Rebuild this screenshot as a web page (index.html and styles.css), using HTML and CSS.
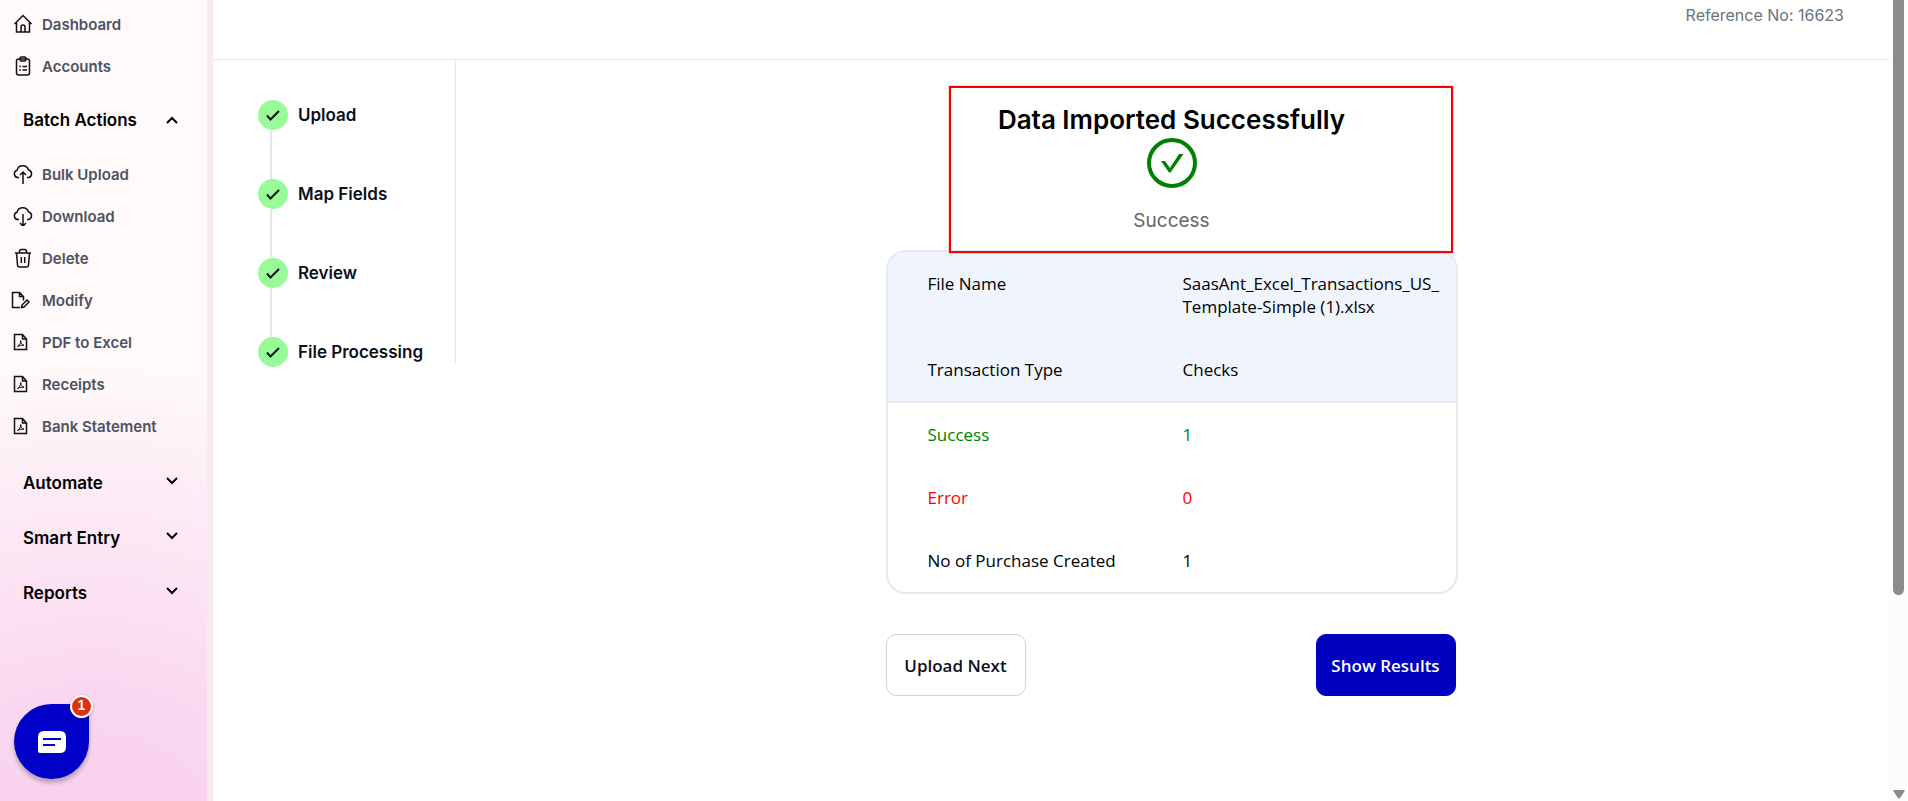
FILE: index.html
```html
<!DOCTYPE html>
<html lang="en">
<head>
    <meta charset="UTF-8">
    <meta name="viewport" content="width=device-width, initial-scale=1.0">
    <title>Bulk Upload</title>
    <link rel="stylesheet" href="styles.css">
</head>
<body>
    <svg class="sprite" aria-hidden="true">
        <symbol id="icon-pdf" viewBox="0 0 20 20">
            <path d="M3.5 2.5h8l4 4.500v10.500h-12z M11.500 2.500v4.500h4"/>
            <path d="M6.500 14.500c2-1 3.500-3.500 3.200-6 0 2.500 1.300 4.300 3.300 4.800-2.500-.3-4.500.2-6.500 1.200z" stroke-width="1"/>
        </symbol>
        <symbol id="icon-down" viewBox="0 0 12 8">
            <path d="M1 1l5 5 5-5"/>
        </symbol>
        <symbol id="icon-tick" viewBox="0 0 14 12">
            <path d="M1 6.500l3.500 4L13 2"/>
        </symbol>
    </svg>

    <div class="layout">
        <nav class="sidebar">
            <ul class="menu">
                <li><a href="#">
                    <svg class="icon" viewBox="0 0 20 20"><path d="M1.500 10L10 1.500 18.500 10M3.500 8.500v9.500h13V8.500M8 18v-5a2 2 0 0 1 4 0v5"/></svg>
                    Dashboard</a></li>
                <li><a href="#">
                    <svg class="icon" viewBox="0 0 20 20"><rect x="3.500" y="3" width="13" height="16" rx="2"/><rect x="7" y="1" width="6" height="4" rx="1.500"/><path d="M6.300 10.500h1.500M9.500 10.500h4.500M6.300 14h1.500M9.500 14h4.500" stroke-width="1.300"/></svg>
                    Accounts</a></li>
            </ul>

            <button class="group group-open" type="button">Batch Actions <svg class="chevron chevron-up"><use href="#icon-down"/></svg></button>
            <ul class="menu menu-batch">
                <li><a href="#">
                    <svg class="icon" viewBox="0 0 20 20"><path d="M6 13.500H4.500a3.700 3.700 0 0 1-.5-7.200 6 6 0 0 1 11.600-.3 3.900 3.900 0 0 1 .2 7.500H14M10 20V8.500M7 11l3-3 3 3"/></svg>
                    Bulk Upload</a></li>
                <li><a href="#">
                    <svg class="icon" viewBox="0 0 20 20"><path d="M6 13.500H4.500a3.700 3.700 0 0 1-.5-7.200 6 6 0 0 1 11.600-.3 3.900 3.900 0 0 1 .2 7.500H14M10 8v11.500M7 17l3 3 3-3"/></svg>
                    Download</a></li>
                <li><a href="#">
                    <svg class="icon" viewBox="0 0 20 20"><path d="M2 5h16M6.500 5V3.500q0-2 2-2h3q2 0 2 2V5M3.500 5l1 12q.2 2 2 2h7q1.800 0 2-2l1-12M8.300 9v6M11.700 9v6"/></svg>
                    Delete</a></li>
                <li><a href="#">
                    <svg class="icon icon-left" viewBox="0 0 20 20"><path d="M9 17.500H1.500v-15h7l4 4v4M8.500 2.500v4h4M10.500 17.500l.5-2.500 5-5 2 2-5 5z"/></svg>
                    Modify</a></li>
                <li><a href="#"><svg class="icon icon-left"><use href="#icon-pdf"/></svg>PDF to Excel</a></li>
                <li><a href="#"><svg class="icon icon-left"><use href="#icon-pdf"/></svg>Receipts</a></li>
                <li><a href="#"><svg class="icon icon-left"><use href="#icon-pdf"/></svg>Bank Statement</a></li>
            </ul>

            <button class="group" type="button">Automate <svg class="chevron"><use href="#icon-down"/></svg></button>
            <button class="group" type="button">Smart Entry <svg class="chevron"><use href="#icon-down"/></svg></button>
            <button class="group" type="button">Reports <svg class="chevron"><use href="#icon-down"/></svg></button>
        </nav>

        <main class="main">
            <header class="topbar">Reference No: 16623</header>
            <div class="content">
                <ol class="steps">
                    <li><span class="dot"><svg><use href="#icon-tick"/></svg></span>Upload</li>
                    <li><span class="dot"><svg><use href="#icon-tick"/></svg></span>Map Fields</li>
                    <li><span class="dot"><svg><use href="#icon-tick"/></svg></span>Review</li>
                    <li><span class="dot"><svg><use href="#icon-tick"/></svg></span>File Processing</li>
                </ol>

                <section class="result">
                    <div class="result-box">
                        <div class="status">
                            <h1>Data Imported Successfully</h1>
                            <svg class="status-icon" viewBox="0 0 50 50">
                                <circle cx="25" cy="25" r="23"/>
                                <path d="M14 23h4l5 7 9-14h4.500L23.500 34.500h-1.500z"/>
                            </svg>
                            <p>Success</p>
                            <div class="highlight"></div>
                        </div>
                        <table class="summary">
                            <tbody class="file-info">
                                <tr><th scope="row">File Name</th><td>SaasAnt_Excel_Transactions_US_<wbr>Template-Simple (1).xlsx</td></tr>
                                <tr><th scope="row">Transaction Type</th><td>Checks</td></tr>
                            </tbody>
                            <tbody>
                                <tr class="success"><th scope="row">Success</th><td>1</td></tr>
                                <tr class="error"><th scope="row">Error</th><td>0</td></tr>
                                <tr><th scope="row">No of Purchase Created</th><td>1</td></tr>
                            </tbody>
                        </table>
                        <div class="actions">
                            <button class="btn" type="button">Upload Next</button>
                            <button class="btn btn-primary" type="button">Show Results</button>
                        </div>
                    </div>
                </section>
            </div>
        </main>

        <div class="scrollbar">
            <div class="thumb"></div>
            <svg class="scroll-arrow" viewBox="0 0 12 9"><path d="M1 0h10q1 0 .7 1L7 8q-1 1-2 0L.3 1Q0 0 1 0z"/></svg>
        </div>
    </div>

    <button class="chat" type="button" aria-label="Open chat">
        <svg viewBox="0 0 28 22"><path d="M6 0h16q6 0 6 6v10q0 6-6 6H2q-2 0-2-2V6q0-6 6-6z" fill="#fff"/><path d="M5 8h18M5 14h12" stroke="#0000c8" stroke-width="2"/></svg>
        <span class="chat-badge">1</span>
    </button>
</body>
</html>
```
FILE: styles.css
```css
* {
    box-sizing: border-box;
}
body {
    margin: 0;
    font-family: Inter, Arial, sans-serif;
    color: #000;
    background-color: #fff;
}
ul, ol {
    list-style: none;
    margin: 0;
    padding: 0;
}
svg {
    fill: none;
    stroke: currentColor;
    flex-shrink: 0;
}
.sprite {
    display: none;
}
.layout {
    display: flex;
    height: 100vh;
    overflow: hidden;
}

/* sidebar */
.sidebar {
    width: 213px;
    flex-shrink: 0;
    padding-top: 3px;
    border-right: 6px solid #f6ebf4;
    background: radial-gradient(circle 600px at 45% 110%, #f9cbeb 0%, #fad7f0 32%, #fce6f4 56%, #fef8f9 84%, #fff9f9 100%);
}
.menu a {
    display: flex;
    align-items: center;
    height: 42px;
    padding-left: 13px;
    gap: 9px;
    color: #4b5262;
    font-size: 15px;
    font-weight: 600;
    text-decoration: none;
}
.menu-batch {
    padding-bottom: 8px;
}
.icon {
    width: 20px;
    height: 20px;
    color: #111;
    stroke-width: 1.5;
}
.icon-left {
    margin-left: -2px;
    margin-right: 2px;
}
.group {
    display: flex;
    align-items: center;
    justify-content: space-between;
    width: 100%;
    height: 55px;
    padding: 0 29px 0 23px;
    border: none;
    background: none;
    font-family: inherit;
    font-size: 17px;
    font-weight: 600;
    color: #000;
    cursor: pointer;
}
.group-open {
    height: 66px;
}
.chevron {
    width: 12px;
    height: 8px;
    stroke-width: 2;
    margin-bottom: 4px;
}
.chevron-up {
    transform: rotate(180deg);
    margin-bottom: 0;
}

/* main area */
.main {
    flex: 1;
}
.topbar {
    height: 60px;
    padding: 4px 45px 0 0;
    border-bottom: 1px solid #e5e7eb;
    color: #6b7280;
    font-size: 16px;
    line-height: 22px;
    text-align: right;
}
.content {
    display: flex;
    align-items: flex-start;
}
.steps {
    width: 243px;
    padding: 40px 0 0 45px;
    height: 304px;
    border-right: 1px solid #e5e7eb;
}
.steps li {
    position: relative;
    display: flex;
    align-items: center;
    gap: 10px;
    height: 30px;
    margin-bottom: 49px;
    color: #0b1020;
    font-size: 17px;
    font-weight: 600;
}
.steps li:last-child {
    margin-bottom: 0;
}
/* line joining a step to the next one */
.steps li:not(:last-child)::after {
    content: "";
    position: absolute;
    left: 12px;
    top: 30px;
    width: 2px;
    height: 49px;
    background-color: #e5e9ee;
}
.dot {
    display: flex;
    align-items: center;
    justify-content: center;
    width: 30px;
    height: 30px;
    border-radius: 50%;
    background-color: #98fb98;
}
.dot svg {
    width: 14px;
    height: 12px;
    stroke-width: 2;
}
.result {
    flex: 1;
    display: flex;
    justify-content: center;
    padding: 40px 22px 40px 20px;
}
.result-box {
    width: 572px;
}
.status {
    position: relative;
    display: flex;
    flex-direction: column;
    align-items: center;
    height: 150px;
}
.status h1 {
    margin: 0;
    padding-top: 2px;
    font-size: 26px;
    font-weight: 600;
    line-height: 36px;
}
.status-icon {
    width: 50px;
    height: 50px;
    color: #008000;
    stroke-width: 4;
}
.status-icon path {
    fill: #008000;
    stroke: none;
}
.status p {
    margin: 21px 0 0;
    color: #666;
    font-size: 19px;
    line-height: 24px;
}
.highlight {
    position: absolute;
    top: -14px;
    left: 63px;
    width: 504px;
    height: 167px;
    border: 2px solid #f00;
    box-shadow: 0 0 1px #f00;
}
.summary {
    width: 100%;
    border: 2px solid #e6e9ee;
    border-radius: 20px;
    border-spacing: 0;
    table-layout: fixed;
    overflow: hidden;
    font-family: "Open Sans", sans-serif;
    font-size: 17px;
    line-height: 23px;
}
.summary th, .summary td {
    height: 63px;
    padding: 20px 0;
    font-weight: 400;
    text-align: left;
    vertical-align: top;
}
.summary th {
    width: 295px;
    padding-left: 40px;
}
.file-info {
    background-color: #f0f5fd;
}
.file-info tr:last-child > * {
    border-bottom: 2px solid #e6e9ee;
}
.success {
    color: #008000;
}
.error {
    color: #f00;
}
.actions {
    display: flex;
    justify-content: space-between;
    padding: 40px 2px 0 0;
}
.btn {
    width: 140px;
    height: 62px;
    border: 1px solid #cbd5e1;
    border-radius: 10px;
    background-color: #fff;
    color: #0b1020;
    font-family: "Open Sans", sans-serif;
    font-size: 17px;
    font-weight: 600;
    cursor: pointer;
}
.btn-primary {
    border-color: #0000c0;
    background-color: #0000c0;
    color: #fff;
}

/* page scrollbar */
.scrollbar {
    display: flex;
    flex-direction: column;
    justify-content: space-between;
    align-items: center;
    width: 19px;
    padding-bottom: 2px;
    background-color: #fcfcfc;
}
.thumb {
    width: 11px;
    height: 595px;
    border-radius: 0 0 6px 6px;
    background-color: #8b8b8b;
}
.scroll-arrow {
    width: 12px;
    height: 9px;
    fill: #8b8b8b;
    stroke: none;
}

/* chat launcher */
.chat {
    position: fixed;
    left: 14px;
    bottom: 22px;
    display: flex;
    align-items: center;
    justify-content: center;
    width: 75px;
    height: 75px;
    border: none;
    border-radius: 50% 10px 50% 50%;
    background-color: #0000c8;
    box-shadow: 0 4px 4px rgba(0, 0, 0, 0.25);
    cursor: pointer;
}
.chat svg {
    width: 28px;
    height: 22px;
    stroke: none;
}
.chat-badge {
    position: absolute;
    top: -9px;
    right: -4px;
    width: 23px;
    height: 23px;
    border: 2px solid #fff;
    border-radius: 50%;
    background-color: #dd330b;
    color: #fff;
    font-size: 14px;
    font-weight: 700;
    line-height: 16px;
    box-shadow: 0 1px 3px rgba(0, 0, 0, 0.3);
}
```
